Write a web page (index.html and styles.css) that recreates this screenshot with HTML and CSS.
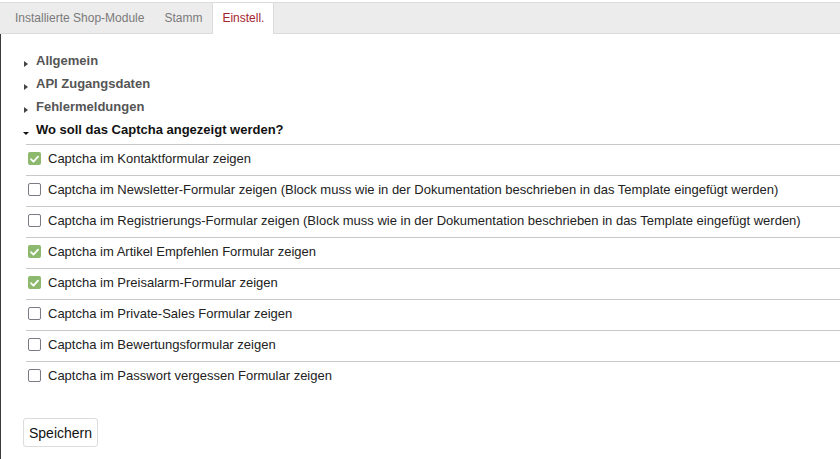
FILE: index.html
```html
<!DOCTYPE html>
<html lang="de">
<head>
<meta charset="utf-8">
<title>Einstellungen</title>
<link rel="stylesheet" href="styles.css">
</head>
<body>
<div class="tabs">
  <div class="tab">Installierte Shop-Module</div>
  <div class="tab">Stamm</div>
  <div class="tab active">Einstell.</div>
</div>
<div class="content">
  <div class="group"><span class="tri right"></span>Allgemein</div>
  <div class="group"><span class="tri right"></span>API Zugangsdaten</div>
  <div class="group"><span class="tri right"></span>Fehlermeldungen</div>
  <div class="group open"><span class="tri down"></span>Wo soll das Captcha angezeigt werden?</div>
  <div class="list">
    <div class="row"><span class="cb checked"><svg viewBox="0 0 14 14" width="14" height="14"><path d="M3.2 7.2 L5.9 9.9 L10.8 4.4" fill="none" stroke="#fff" stroke-width="1.9" stroke-linecap="round" stroke-linejoin="round"/></svg></span>Captcha im Kontaktformular zeigen</div>
    <div class="row"><span class="cb"></span>Captcha im Newsletter-Formular zeigen (Block muss wie in der Dokumentation beschrieben in das Template eingefügt werden)</div>
    <div class="row"><span class="cb"></span>Captcha im Registrierungs-Formular zeigen (Block muss wie in der Dokumentation beschrieben in das Template eingefügt werden)</div>
    <div class="row"><span class="cb checked"><svg viewBox="0 0 14 14" width="14" height="14"><path d="M3.2 7.2 L5.9 9.9 L10.8 4.4" fill="none" stroke="#fff" stroke-width="1.9" stroke-linecap="round" stroke-linejoin="round"/></svg></span>Captcha im Artikel Empfehlen Formular zeigen</div>
    <div class="row"><span class="cb checked"><svg viewBox="0 0 14 14" width="14" height="14"><path d="M3.2 7.2 L5.9 9.9 L10.8 4.4" fill="none" stroke="#fff" stroke-width="1.9" stroke-linecap="round" stroke-linejoin="round"/></svg></span>Captcha im Preisalarm-Formular zeigen</div>
    <div class="row"><span class="cb"></span>Captcha im Private-Sales Formular zeigen</div>
    <div class="row"><span class="cb"></span>Captcha im Bewertungsformular zeigen</div>
    <div class="row last"><span class="cb"></span>Captcha im Passwort vergessen Formular zeigen</div>
  </div>
  <div class="actions"><button class="btn" type="button">Speichern</button></div>
</div>
</body>
</html>
```
FILE: styles.css
```css
html, body {
  margin: 0;
  padding: 0;
  background: #fff;
}
body {
  font-family: "Liberation Sans", Arial, sans-serif;
  color: #222;
  height: 459px;
  overflow: hidden;
}
.tabs {
  margin-top: 2px;
  height: 30px;
  display: flex;
  background: #ececec;
  border-top: 1px solid #dcdcdc;
  border-bottom: 1px solid #dcdcdc;
  padding-left: 5px;
}
.tab {
  font-size: 12px;
  color: #7a7a7a;
  padding: 0 9px;
  line-height: 30px;
  border-left: 1px solid transparent;
  border-right: 1px solid transparent;
}
.tab.active {
  background: #fff;
  color: #a3232f;
  border-left-color: #dcdcdc;
  border-right-color: #dcdcdc;
  height: 31px;
}
.content {
  border-left: 1px solid #3a3a3a;
  padding: 15px 0 0 22px;
  height: 410px;
}
.group {
  font-size: 13px;
  font-weight: bold;
  color: #555;
  line-height: 23px;
  display: flex;
  align-items: center;
}
.group.open {
  color: #111;
}
.tri {
  display: inline-block;
  width: 0;
  height: 0;
  margin-right: 8px;
}
.tri.right {
  border-top: 3px solid transparent;
  border-bottom: 3px solid transparent;
  border-left: 4px solid #444;
  margin-left: 1px;
  margin-top: 6px;
}
.tri.down {
  border-left: 3.5px solid transparent;
  border-right: 3.5px solid transparent;
  border-top: 3.5px solid #111;
  margin-top: 7px;
  margin-right: 7px;
}
.list {
  margin-top: 3px;
  margin-left: 3px;
}
.row {
  border-top: 1px solid #c8c8c8;
  font-size: 13px;
  color: #222;
  height: 27px;
  padding-bottom: 3px;
  display: flex;
  align-items: center;
  padding-left: 2px;
}
.cb {
  box-sizing: border-box;
  width: 13px;
  height: 13px;
  border: 1.5px solid #7b7b86;
  border-radius: 2px;
  background: #fff;
  margin-right: 7px;
  display: inline-flex;
  align-items: center;
  justify-content: center;
  flex-shrink: 0;
}
.cb.checked {
  border: none;
  background: #8cb96e;
}
.cb svg {
  display: block;
}
.actions {
  margin-top: 26px;
}
.btn {
  font-family: "Liberation Sans", Arial, sans-serif;
  font-size: 14px;
  color: #111;
  background: #fff;
  border: 1px solid #dcdcdc;
  border-radius: 3px;
  height: 29px;
  padding: 0 5px;
}
```
